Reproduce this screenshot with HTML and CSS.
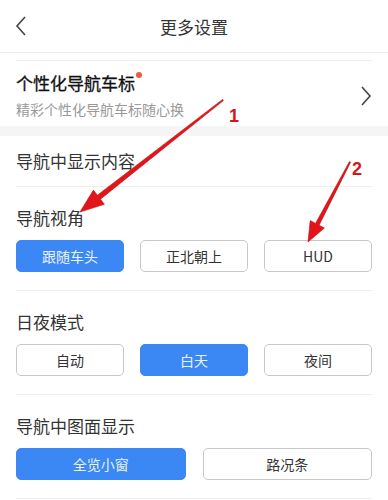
FILE: index.html
```html
<!DOCTYPE html>
<html lang="zh">
<head>
<meta charset="utf-8">
<link rel="stylesheet" href="styles.css">
</head>
<body>
<div class="page">
  <header class="topbar">
    <svg class="back" width="12" height="20" viewBox="0 0 12 20"><path d="M10 1 L2 10 L10 19" fill="none" stroke="#444" stroke-width="1.6"/></svg>
    <div class="title">更多设置</div>
  </header>
  <div class="spacer"></div>
  <div class="carlogo">
    <div class="carlogo-text">
      <div class="carlogo-title">个性化导航车标<span class="dot"></span></div>
      <div class="carlogo-sub">精彩个性化导航车标随心换</div>
    </div>
    <svg class="chev" width="12" height="20" viewBox="0 0 12 20"><path d="M2 1 L10 10 L2 19" fill="none" stroke="#444" stroke-width="1.6"/></svg>
  </div>
  <div class="band"></div>
  <div class="section-head">导航中显示内容</div>
  <div class="block">
    <div class="block-title">导航视角</div>
    <div class="btns three">
      <div class="btn on">跟随车头</div>
      <div class="btn">正北朝上</div>
      <div class="btn">HUD</div>
    </div>
  </div>
  <div class="block">
    <div class="block-title">日夜模式</div>
    <div class="btns three">
      <div class="btn">自动</div>
      <div class="btn on">白天</div>
      <div class="btn">夜间</div>
    </div>
  </div>
  <div class="block">
    <div class="block-title">导航中图面显示</div>
    <div class="btns two">
      <div class="btn on">全览小窗</div>
      <div class="btn">路况条</div>
    </div>
  </div>
  <svg class="marks" width="388" height="500" viewBox="0 0 388 500">
    <polygon points="222.6,99.4 97.4,195.2 93.4,190.1 80,212 104.4,204.3 100.4,199.2 223.4,100.6" fill="#e3151a" stroke="#b80d10" stroke-width="0.6"/>
    <polygon points="349.4,161.7 315.5,223.4 310.2,220.6 308,242 324.4,228 319.1,225.2 350.6,162.3" fill="#e3151a" stroke="#b80d10" stroke-width="0.6"/>
    <text class="num" x="229" y="122">1</text>
    <text class="num" x="352" y="175">2</text>
  </svg>
</div>
</body>
</html>
```
FILE: styles.css
```css
html, body {
  margin: 0;
  padding: 0;
  background: #fff;
}
body {
  font-family: "Noto Sans CJK SC", "Noto Sans", sans-serif;
  color: #333;
}
.page {
  position: relative;
  width: 388px;
  height: 500px;
  overflow: hidden;
}
.topbar {
  height: 53px;
  border-bottom: 1px solid #ececec;
  display: flex;
  align-items: center;
  justify-content: center;
  position: relative;
  box-sizing: border-box;
}
.back {
  position: absolute;
  left: 15px;
  top: 16px;
}
.title {
  font-size: 17px;
  color: #333;
}
.spacer {
  height: 7px;
}
.carlogo {
  margin: 0 16px;
  border-top: 1px solid #eeeeee;
  height: 66px;
  box-sizing: border-box;
  display: flex;
  align-items: center;
  justify-content: space-between;
}
.carlogo-text {
  display: flex;
  flex-direction: column;
  padding-top: 2px;
}
.carlogo-title {
  font-size: 17px;
  line-height: 24px;
  color: #111;
  font-weight: normal;
  -webkit-text-stroke: 0.3px #111;
}
.dot {
  display: inline-block;
  width: 6px;
  height: 6px;
  border-radius: 50%;
  background: #f25a3a;
  vertical-align: top;
  margin-top: 1px;
  margin-left: 1px;
  -webkit-text-stroke: 0;
}
.carlogo-sub {
  font-size: 14px;
  line-height: 20px;
  color: #999;
  margin-top: 4px;
  -webkit-text-stroke: 0;
}
.chev {
  margin-top: 5px;
}
.band {
  height: 10px;
  background: #f5f5f5;
}
.section-head {
  margin: 0 16px;
  height: 50px;
  border-bottom: 1px solid #eeeeee;
  font-size: 17px;
  line-height: 50px;
  color: #333;
}
.block {
  margin: 0 16px;
  padding: 20px 0 18px;
  border-bottom: 1px solid #eeeeee;
}
.block-title {
  font-size: 17px;
  line-height: 22px;
  color: #333;
  margin-bottom: 11px;
}
.btns {
  display: grid;
}
.btns.three {
  grid-template-columns: 1fr 1fr 1fr;
  column-gap: 16px;
}
.btns.two {
  grid-template-columns: 1fr 1fr;
  column-gap: 17px;
}
.btn {
  height: 32px;
  box-sizing: border-box;
  border: 1px solid #c9c9c9;
  border-radius: 5px;
  display: flex;
  align-items: center;
  justify-content: center;
  font-size: 14px;
  color: #333;
  background: #fff;
}
.btn.on {
  background: #3b88f5;
  border-color: #3b88f5;
  color: #eaf2ff;
}
.marks {
  position: absolute;
  left: 0;
  top: 0;
  pointer-events: none;
}
.num {
  font-family: "Liberation Sans", sans-serif;
  font-weight: bold;
  font-size: 18px;
  fill: #d8141a;
  stroke: #fff;
  stroke-width: 2.5px;
  paint-order: stroke;
}
```
